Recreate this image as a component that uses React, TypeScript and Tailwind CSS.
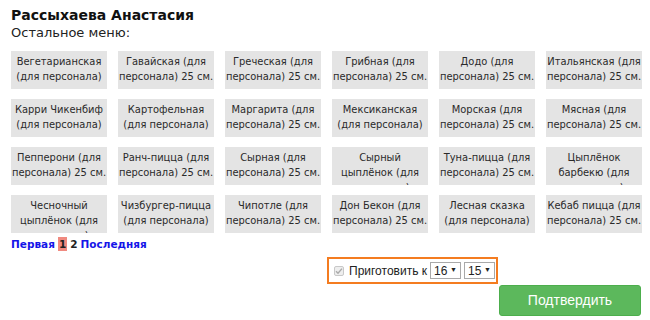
import React from "react";

const items: string[][] = [
  ["Вегетарианская", "(для персонала)"],
  ["Гавайская (для", "персонала) 25 см."],
  ["Греческая (для", "персонала) 25 см."],
  ["Грибная (для", "персонала) 25 см."],
  ["Додо (для", "персонала) 25 см."],
  ["Итальянская (для", "персонала) 25 см."],
  ["Карри Чикенбиф", "(для персонала)"],
  ["Картофельная", "(для персонала)"],
  ["Маргарита (для", "персонала) 25 см."],
  ["Мексиканская", "(для персонала)"],
  ["Морская (для", "персонала) 25 см."],
  ["Мясная (для", "персонала) 25 см."],
  ["Пепперони (для", "персонала) 25 см."],
  ["Ранч-пицца (для", "персонала) 25 см."],
  ["Сырная (для", "персонала) 25 см."],
  ["Сырный", "цыплёнок (для", "персонала)"],
  ["Туна-пицца (для", "персонала) 25 см."],
  ["Цыплёнок", "барбекю (для", "персонала)"],
  ["Чесночный", "цыплёнок (для", "персонала)"],
  ["Чизбургер-пицца", "(для персонала)"],
  ["Чипотле (для", "персонала) 25 см."],
  ["Дон Бекон (для", "персонала) 25 см."],
  ["Лесная сказка", "(для персонала)"],
  ["Кебаб пицца (для", "персонала) 25 см."],
];

export default function App() {
  return (
    <div
      className="w-[650px] h-[320px] bg-white text-[#222] overflow-hidden pl-[11px]"
      style={{ fontFamily: '"DejaVu Sans", Verdana, sans-serif' }}
    >
      <div className="pt-[6px] text-[14px] font-bold leading-[18px] text-[#111]">
        Рассыхаева Анастасия
      </div>
      <div className="mt-[1px] text-[13px] leading-[16px] text-[#222]">Остальное меню:</div>
      <div className="mt-[10px] grid grid-cols-[repeat(6,96px)] gap-x-[11px] gap-y-[10px]">
        {items.map((lines) => (
          <div
            key={lines.join(" ")}
            className="h-[38px] bg-[#e4e4e4] pt-[3px] text-center text-[11px] leading-[15px] text-[#2a2a2a] overflow-x-visible overflow-y-clip"
            style={{ fontFamily: '"DejaVu Sans Condensed", "DejaVu Sans", sans-serif' }}
          >
            {lines.map((l) => (
              <div key={l} className="whitespace-nowrap">
                {l}
              </div>
            ))}
          </div>
        ))}
      </div>
      <div className="mt-[4px] text-[10.5px] font-bold leading-[14px] flex items-center gap-[3px]">
        <span className="text-[#1515e8]">Первая</span>
        <span className="bg-[#f08a80] text-[#222] px-[1px]">1</span>
        <span className="text-[#222]">2</span>
        <span className="text-[#1515e8]">Последняя</span>
      </div>
      <div
        className="mt-[6px] ml-[316px] w-fit h-[27px] border-2 border-[#f47c20] flex items-center pl-[5px] pr-[1px] gap-[3px]"
        style={{ fontFamily: '"Liberation Sans", Arial, sans-serif' }}
      >
        <span className="w-[10px] h-[10px] border border-[#c8c8c8] bg-[#eee] flex items-center justify-center rounded-[2px]">
          <svg width="8" height="8" viewBox="0 0 8 8">
            <path d="M1 4.2 L3 6.2 L7 1.6" stroke="#aaa" strokeWidth="1.4" fill="none" />
          </svg>
        </span>
        <span className="text-[12px] text-[#222] whitespace-nowrap ml-[2px]">Приготовить к</span>
        <span className="h-[17px] w-[31px] border border-[#a9a9a9] bg-white flex items-center justify-between px-[3px] text-[12px]">
          16<span className="text-[7px]">▼</span>
        </span>
        <span className="h-[17px] w-[31px] border border-[#a9a9a9] bg-white flex items-center justify-between px-[3px] text-[12px]">
          15<span className="text-[7px]">▼</span>
        </span>
      </div>
      <div className="flex justify-end pr-[9px] mt-[1px]">
        <div
          className="w-[142px] h-[31px] rounded-[3px] bg-[#5cb85c] border border-[#4cae4c] text-white text-[14px] flex items-center justify-center"
          style={{ fontFamily: '"Liberation Sans", Arial, sans-serif' }}
        >
          Подтвердить
        </div>
      </div>
    </div>
  );
}
